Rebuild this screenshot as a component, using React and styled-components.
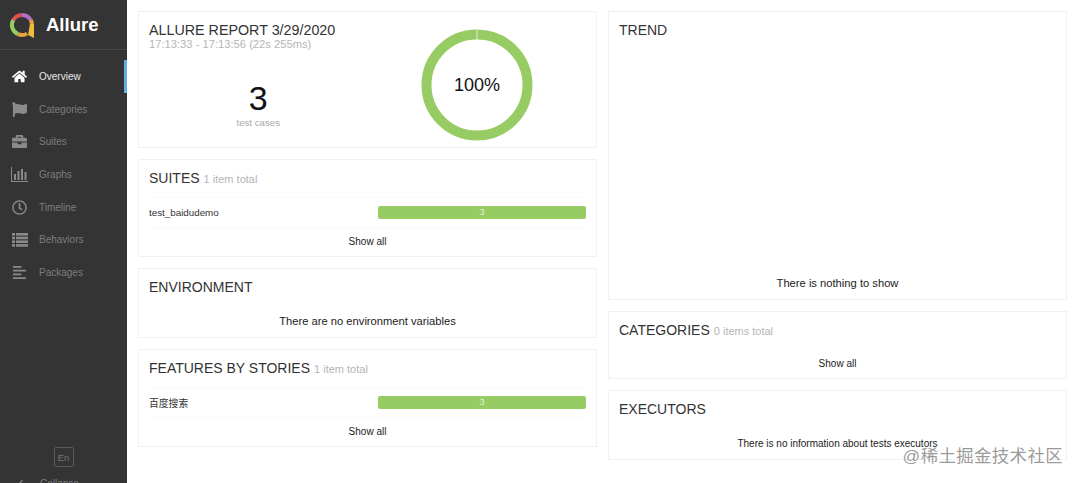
import React from "react";
import styled, { createGlobalStyle } from "styled-components";
import { FaHome, FaFlag, FaBriefcase, FaRegClock, FaAlignLeft, FaAngleLeft } from "react-icons/fa";

const GlobalStyle = createGlobalStyle`
  html, body {
    margin: 0;
    background: #fff;
    font-family: "Liberation Sans", Arial, "Noto Sans CJK SC", sans-serif;
  }
`;

const Page = styled.div`
  position: relative;
  display: flex;
  width: 1080px;
  height: 483px;
  overflow: hidden;
`;

const Sidebar = styled.aside`
  flex: 0 0 127px;
  height: 493px;
  display: flex;
  flex-direction: column;
  background: #343434;
`;

const Brand = styled.div`
  height: 49px;
  display: flex;
  align-items: center;
  gap: 11px;
  padding-left: 9px;
  border-bottom: 1px solid #484848;
`;

const BrandName = styled.span`
  color: #fff;
  font-size: 18.5px;
  font-weight: bold;
`;

const Nav = styled.nav`
  flex: 1;
  padding-top: 10px;
`;

const NavRow = styled.div`
  height: 32.7px;
  display: flex;
  align-items: center;
  font-size: 10px;
  color: ${(p) => (p.$active ? "#e8e8e8" : "#7d7d7d")};
  border-right: 3px solid ${(p) => (p.$active ? "#62aee6" : "transparent")};
`;

const NavIcon = styled.span`
  flex: 0 0 39px;
  display: flex;
  justify-content: center;
  font-size: 15px;
  color: ${(p) => (p.$active ? "#fff" : "#8a8a8a")};
`;

const Lang = styled.div`
  align-self: center;
  width: 20px;
  height: 20px;
  margin-bottom: 6px;
  display: flex;
  align-items: center;
  justify-content: center;
  font-size: 9.5px;
  color: #777;
  border: 1px solid #5a5a5a;
  border-radius: 2px;
  box-sizing: border-box;
`;

const Collapse = styled.div`
  height: 20px;
  display: flex;
  align-items: center;
  gap: 14px;
  padding-left: 16px;
  font-size: 10px;
  color: #7d7d7d;
`;

const Main = styled.main`
  flex: 1;
  display: grid;
  grid-template-columns: 459px 459px;
  column-gap: 11px;
  align-content: start;
  padding: 11px 0 0 11px;
`;

const Column = styled.div`
  display: flex;
  flex-direction: column;
  gap: 11px;
`;

const Card = styled.section`
  box-sizing: border-box;
  height: ${(p) => p.$h}px;
  display: flex;
  flex-direction: column;
  padding: 0 10px;
  border: 1px solid #f1f1f1;
  background: #fff;
`;

const Title = styled.h2`
  margin: 0 0 2px;
  height: 35px;
  flex: none;
  display: flex;
  align-items: center;
  gap: 4px;
  font-size: 14px;
  font-weight: normal;
  color: #333;
`;

const Muted = styled.span`
  margin-top: 2px;
  font-size: 11px;
  color: #b5b5b5;
`;

const Summary = styled.div`
  flex: 1;
  display: grid;
  grid-template-columns: 1fr 1fr;
`;

const SummaryLeft = styled.div`
  display: flex;
  flex-direction: column;
`;

const ReportTitle = styled.h2`
  margin: 10px 0 0;
  font-size: 14.3px;
  line-height: 16px;
  font-weight: normal;
  white-space: nowrap;
  color: #333;
`;

const Duration = styled.div`
  font-size: 11.2px;
  line-height: 12px;
  color: #b5b5b5;
`;

const Count = styled.div`
  margin-top: 29px;
  text-align: center;
  font-size: 34px;
  line-height: 38px;
  color: #111;
`;

const CountLabel = styled.div`
  text-align: center;
  font-size: 9.7px;
  line-height: 11px;
  color: #aaa;
`;

const DonutWrap = styled.div`
  display: flex;
  justify-content: center;
  padding-top: 17px;
`;

const Row = styled.div`
  flex: none;
  height: 29px;
  display: grid;
  grid-template-columns: 1fr 208px;
  align-items: center;
  font-size: 9.8px;
  color: #333;
  border-top: 1px solid #fafafa;
  border-bottom: 1px solid #fafafa;
`;

const Bar = styled.div`
  height: 12.5px;
  border-radius: 2px;
  background: #97cc64;
  color: #e9f6dc;
  font-size: 8.5px;
  line-height: 12.5px;
  text-align: center;
`;

const Footer = styled.div`
  flex: 1;
  display: flex;
  align-items: ${(p) => (p.$end ? "flex-end" : "center")};
  justify-content: center;
  padding-bottom: ${(p) => p.$pb || 0}px;
  font-size: ${(p) => p.$size || 10}px;
  color: #222;
`;

const Watermark = styled.div`
  position: absolute;
  right: 17px;
  bottom: 16px;
  font-size: 17.4px;
  letter-spacing: 0.4px;
  color: rgba(120, 120, 120, 0.75);
`;

const Logo = () => (
  <svg width="26" height="28" viewBox="0 0 26 28">
    <g fill="none" strokeWidth="4">
      <path d="M13 4 A10 10 0 0 0 4.3 9" stroke="#d9534f" />
      <path d="M4.3 9 A10 10 0 0 0 9 23.2" stroke="#97cc64" />
      <path d="M13 4 A10 10 0 0 1 21.7 9" stroke="#b36ec9" />
      <path d="M21.7 9 A10 10 0 0 1 23 14" stroke="#e8a33d" />
      <path d="M9 23.2 A10 10 0 0 0 18 22.6" stroke="#e8a33d" />
    </g>
    <path d="M19 24 L25 27 L25 13 L21 13 Z" fill="#f0bb3c" />
  </svg>
);

const ChartIcon = () => (
  <svg width="17" height="15" viewBox="0 0 17 15" fill="#8a8a8a">
    <rect x="0" y="0" width="1" height="15" />
    <rect x="0" y="14" width="17" height="1" />
    <rect x="3" y="7" width="2" height="6" />
    <rect x="6.5" y="4" width="2" height="9" />
    <rect x="10" y="2" width="2" height="11" />
    <rect x="13.5" y="5" width="2" height="8" />
  </svg>
);

const ListIcon = () => (
  <svg width="16" height="14" viewBox="0 0 16 14" fill="#8a8a8a">
    {[0, 3.7, 7.4, 11.1].map((y) => (
      <React.Fragment key={y}>
        <rect x="0" y={y} width="3" height="2.6" />
        <rect x="4" y={y} width="12" height="2.6" />
      </React.Fragment>
    ))}
  </svg>
);

const Donut = () => (
  <svg width="112" height="112" viewBox="0 0 112 112">
    <circle cx="56" cy="56" r="50.5" fill="none" stroke="#97cc64" strokeWidth="10" />
    <rect x="55.5" y="0" width="1" height="11" fill="#e4f2d6" />
    <text x="56" y="62" textAnchor="middle" fontSize="18" fill="#111">100%</text>
  </svg>
);

const navItems = [
  { label: "Overview", icon: <FaHome />, active: true },
  { label: "Categories", icon: <FaFlag /> },
  { label: "Suites", icon: <FaBriefcase /> },
  { label: "Graphs", icon: <ChartIcon /> },
  { label: "Timeline", icon: <FaRegClock /> },
  { label: "Behaviors", icon: <ListIcon /> },
  { label: "Packages", icon: <FaAlignLeft /> },
];

const App = () => (
  <Page>
    <GlobalStyle />
    <Sidebar>
      <Brand>
        <Logo />
        <BrandName>Allure</BrandName>
      </Brand>
      <Nav>
        {navItems.map((item) => (
          <NavRow key={item.label} $active={item.active}>
            <NavIcon $active={item.active}>{item.icon}</NavIcon>
            {item.label}
          </NavRow>
        ))}
      </Nav>
      <Lang>En</Lang>
      <Collapse>
        <FaAngleLeft />
        Collapse
      </Collapse>
    </Sidebar>
    <Main>
      <Column>
        <Card $h={137}>
          <Summary>
            <SummaryLeft>
              <ReportTitle>ALLURE REPORT 3/29/2020</ReportTitle>
              <Duration>17:13:33 - 17:13:56 (22s 255ms)</Duration>
              <Count>3</Count>
              <CountLabel>test cases</CountLabel>
            </SummaryLeft>
            <DonutWrap>
              <Donut />
            </DonutWrap>
          </Summary>
        </Card>
        <Card $h={98}>
          <Title>
            SUITES <Muted>1 item total</Muted>
          </Title>
          <Row>
            test_baidudemo
            <Bar>3</Bar>
          </Row>
          <Footer $pb={1}>Show all</Footer>
        </Card>
        <Card $h={70}>
          <Title>ENVIRONMENT</Title>
          <Footer $size={11.2} $pb={1}>There are no environment variables</Footer>
        </Card>
        <Card $h={98}>
          <Title>
            FEATURES BY STORIES <Muted>1 item total</Muted>
          </Title>
          <Row>
            百度搜索
            <Bar>3</Bar>
          </Row>
          <Footer $pb={1}>Show all</Footer>
        </Card>
      </Column>
      <Column>
        <Card $h={289}>
          <Title>TREND</Title>
          <Footer $end $pb={10} $size={11.2}>There is nothing to show</Footer>
        </Card>
        <Card $h={68}>
          <Title>
            CATEGORIES <Muted>0 items total</Muted>
          </Title>
          <Footer>Show all</Footer>
        </Card>
        <Card $h={70}>
          <Title>EXECUTORS</Title>
          <Footer>There is no information about tests executors</Footer>
        </Card>
      </Column>
    </Main>
    <Watermark>@稀土掘金技术社区</Watermark>
  </Page>
);

export default App;
